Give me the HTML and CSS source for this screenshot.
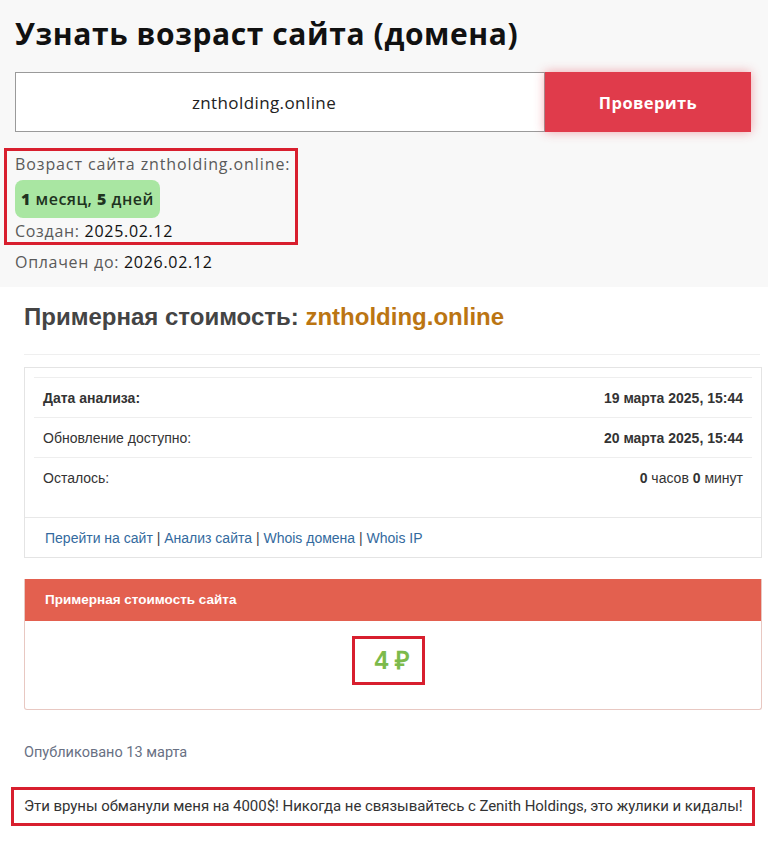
FILE: index.html
```html
<!DOCTYPE html>
<html lang="ru">
<head>
    <meta charset="UTF-8">
    <meta name="viewport" content="width=device-width, initial-scale=1.0">
    <title>Узнать возраст сайта</title>
    <link rel="stylesheet" href="styles.css">
</head>
<body>
    <section class="age">
        <h1>Узнать возраст сайта (домена)</h1>

        <form class="check">
            <input class="domain" type="text" value="zntholding.online">
            <button class="check-btn" type="button">Проверить</button>
        </form>

        <div class="result marked">
            <p class="line">Возраст сайта zntholding.online:</p>
            <span class="badge"><b>1</b> месяц, <b>5</b> дней</span>
            <p class="line">Создан: <span class="val">2025.02.12</span></p>
        </div>
        <p class="line paid">Оплачен до: <span class="val">2026.02.12</span></p>
    </section>

    <section class="cost">
        <h2>Примерная стоимость: <span class="site">zntholding.online</span></h2>
        <div class="divider"></div>

        <div class="panel">
            <table class="info">
                <tr>
                    <th>Дата анализа:</th>
                    <td><b>19 марта 2025, 15:44</b></td>
                </tr>
                <tr>
                    <td>Обновление доступно:</td>
                    <td><b>20 марта 2025, 15:44</b></td>
                </tr>
                <tr>
                    <td>Осталось:</td>
                    <td><b>0</b> часов <b>0</b> минут</td>
                </tr>
            </table>
            <div class="links">
                <a href="#">Перейти на сайт</a> | <a href="#">Анализ сайта</a> | <a href="#">Whois домена</a> | <a href="#">Whois IP</a>
            </div>
        </div>

        <div class="price-panel">
            <div class="price-head">Примерная стоимость сайта</div>
            <div class="price-body">
                <span class="price marked">4 ₽</span>
            </div>
        </div>

        <p class="published">Опубликовано 13 марта</p>
        <p class="review marked">Эти вруны обманули меня на 4000$! Никогда не связывайтесь с Zenith Holdings, это жулики и кидалы!</p>
    </section>
</body>
</html>
```

FILE: styles.css
```css
body {
    margin: 0;
    background-color: #fff;
    color: #333;
}
.marked {
    border: 3px solid #d81f2e;
}

/* верхний блок */
.age {
    background-color: #f8f8f8;
    padding: 16px 17px 13px 15px;
    font-family: 'Open Sans', 'Noto Sans', sans-serif;
}
.age h1 {
    margin: 0;
    font-size: 30px;
    line-height: 36px;
    font-weight: 700;
    letter-spacing: 0.6px;
    color: #111;
}
.check {
    display: flex;
    margin-top: 20px;
    height: 60px;
}
.domain {
    flex: 1;
    box-sizing: border-box;
    height: 60px;
    border: 1px solid #9a9a9a;
    background: #fff;
    text-align: center;
    font-family: 'Open Sans', sans-serif;
    font-size: 17px;
    letter-spacing: 0.4px;
    color: #222;
    padding: 0 32px 0 0;
    outline: none;
}
.check-btn {
    width: 206px;
    height: 60px;
    border: none;
    background-color: #e03b4b;
    color: #fff;
    font-family: 'Open Sans', sans-serif;
    font-weight: 700;
    font-size: 16.5px;
    letter-spacing: 0.4px;
    box-shadow: 0 0 10px rgba(230, 60, 75, 0.45);
    cursor: pointer;
}
.result {
    width: 280px;
    margin: 16px 0 0 -11px;
    padding: 0 0 0 8px;
}
.line {
    margin: 0;
    font-size: 16px;
    line-height: 24px;
    letter-spacing: 0.7px;
    color: #5a5a5a;
}
.result .line:first-child {
    margin-top: 1px;
    letter-spacing: 0.9px;
}
.result .line:last-child {
    line-height: 22px;
}
.val {
    color: #111;
    font-weight: 500;
}
.badge {
    display: inline-block;
    margin: 4px 0 2px;
    padding: 0 6px;
    height: 38px;
    line-height: 38px;
    border-radius: 8px;
    background-color: #a9e6a2;
    color: #1f331f;
    font-size: 16px;
    letter-spacing: 0.5px;
    font-weight: 600;
}
.badge b {
    font-weight: 800;
}
.paid {
    margin-top: 5px;
}

/* нижний блок */
.cost {
    padding: 15px 6px 20px 24px;
    font-family: 'Liberation Sans', Arial, sans-serif;
}
.cost h2 {
    margin: 0;
    font-size: 24px;
    line-height: 30px;
    color: #444;
}
.site {
    color: #bb7512;
}
.divider {
    margin: 22px 2px 12px 0;
    border-top: 1px solid #efefef;
}
.panel {
    border: 1px solid #e4e4e4;
    padding: 9px 9px 0;
}
.info {
    width: 100%;
    border-collapse: collapse;
    font-size: 14px;
    color: #333;
}
.info th,
.info td {
    height: 39px;
    padding: 0 9px;
    border-top: 1px solid #eeeeee;
    text-align: left;
    font-weight: 400;
}
.info th {
    font-weight: 700;
}
.info td:last-child {
    text-align: right;
}
.links {
    margin: 20px -9px 0;
    border-top: 1px solid #e8e8e8;
    height: 39px;
    line-height: 40px;
    padding-left: 20px;
    font-size: 14px;
    color: #444;
}
.links a {
    color: #336a9e;
    text-decoration: none;
}
.price-panel {
    margin-top: 21px;
    border: 1px solid #e8c8c2;
    border-top: none;
    border-radius: 0 0 3px 3px;
}
.price-head {
    background-color: #e3604f;
    color: #fff;
    font-weight: 700;
    font-size: 13.5px;
    height: 42px;
    line-height: 42px;
    padding-left: 20px;
}
.price-body {
    height: 88px;
    display: flex;
    justify-content: center;
    padding-top: 15px;
    box-sizing: border-box;
}
.price {
    box-sizing: border-box;
    width: 73px;
    height: 49px;
    line-height: 43px;
    padding-left: 8px;
    text-align: center;
    color: #7cba4b;
    font-size: 25px;
    font-weight: 700;
    margin-right: 9px;
}
.published {
    margin: 32px 0 0;
    font-family: Roboto, sans-serif;
    font-size: 14.5px;
    line-height: 22px;
    color: #687083;
}
.review {
    margin: 23px 7px 0 -13px;
    height: 33px;
    line-height: 33px;
    padding-left: 10px;
    font-family: Roboto, sans-serif;
    font-size: 15px;
    letter-spacing: -0.05px;
    color: #333;
    white-space: nowrap;
}
```
